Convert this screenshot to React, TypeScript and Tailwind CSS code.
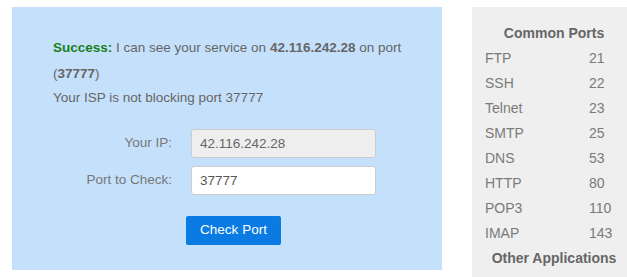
import React from "react";

const ports: [string, string][] = [
  ["FTP", "21"],
  ["SSH", "22"],
  ["Telnet", "23"],
  ["SMTP", "25"],
  ["DNS", "53"],
  ["HTTP", "80"],
  ["POP3", "110"],
  ["IMAP", "143"],
];

export default function App() {
  return (
    <div className="w-[627px] h-[277px] overflow-hidden bg-white font-['Liberation_Sans',Arial,sans-serif] text-[13.5px] text-[#666]">
      <div className="flex items-start pt-[7px] pl-[12px] gap-[30px]">
        {/* port checker panel */}
        <div className="w-[430px] h-[263px] shrink-0 bg-[#c5e0fb] pl-[41px] pt-[28px]">
          <p className="leading-[26px] w-[360px]">
            <b className="text-[#17801c]">Success:</b> I can see your service on{" "}
            <b>42.116.242.28</b> on port (<b>37777</b>)
          </p>
          <p className="leading-[24px] -mt-[1px]">Your ISP is not blocking port 37777</p>

          <div className="mt-[19px] flex flex-col gap-[8px]">
            <div className="flex items-center">
              <label className="w-[119px] text-right text-[#777]">Your IP:</label>
              <input
                className="ml-[19px] w-[185px] h-[29px] rounded-[3px] border border-[#ccc] bg-[#eee] px-[8px] text-[13.5px] text-[#666] outline-none"
                value="42.116.242.28"
                readOnly
              />
            </div>
            <div className="flex items-center">
              <label className="w-[119px] text-right text-[#777]">Port to Check:</label>
              <input
                className="ml-[19px] w-[185px] h-[29px] rounded-[3px] border border-[#ccc] bg-white px-[8px] text-[13.5px] text-[#555] outline-none"
                defaultValue="37777"
              />
            </div>
          </div>

          <button className="mt-[21px] ml-[133px] w-[95px] h-[29px] rounded-[2px] bg-[#0a7be3] text-[13.5px] text-white">
            Check Port
          </button>
        </div>

        {/* common ports */}
        <div className="w-[164px] h-[270px] shrink-0 bg-[#efefef] pt-[14px] text-[14px]">
          <div className="text-center font-bold leading-[25px] text-[#666]">Common Ports</div>
          {ports.map(([name, num]) => (
            <div key={name} className="flex pl-[13px] leading-[25px] text-[#7a7a7a]">
              <span className="w-[104px]">{name}</span>
              <span>{num}</span>
            </div>
          ))}
          <div className="text-center font-bold leading-[24px] text-[#666]">Other Applications</div>
        </div>
      </div>
    </div>
  );
}
